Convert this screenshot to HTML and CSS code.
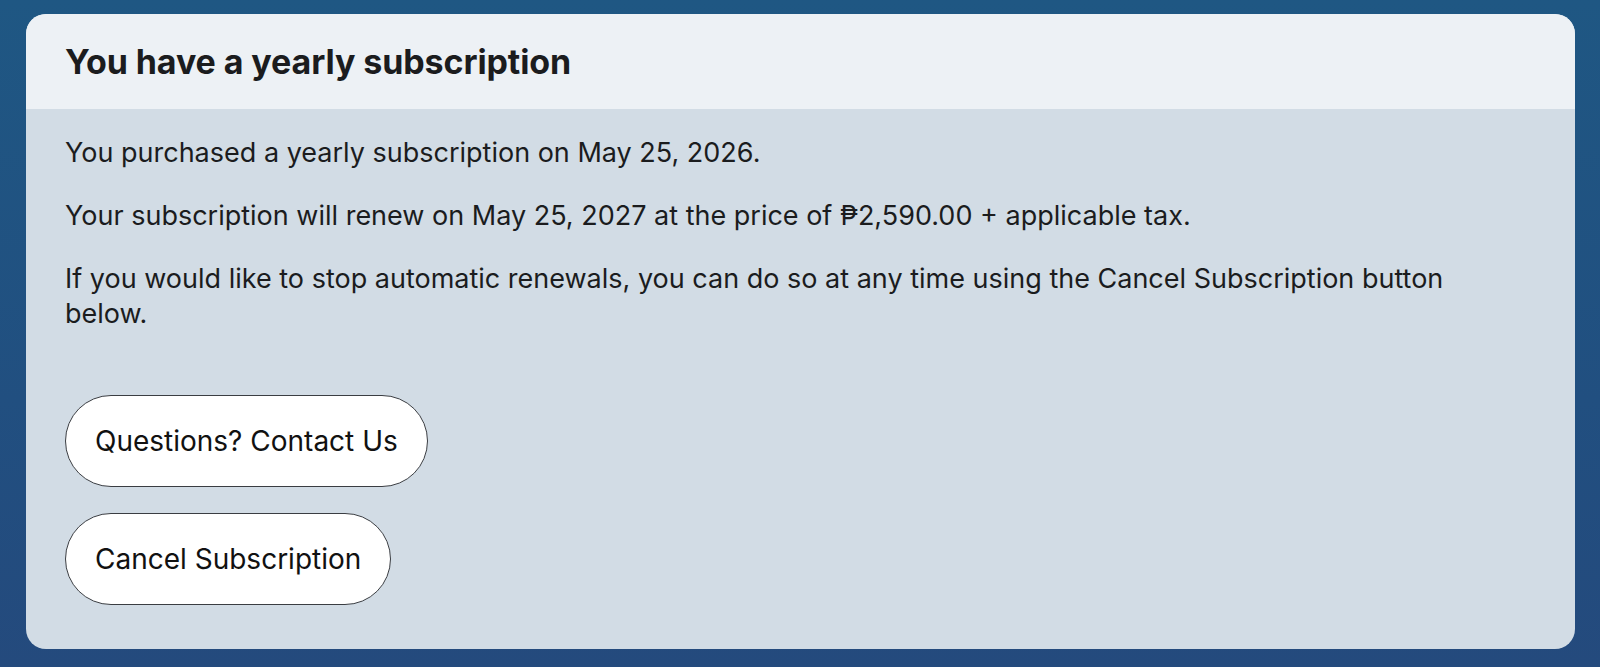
FILE: index.html
```html
<!DOCTYPE html>
<html lang="en">
<head>
    <meta charset="UTF-8">
    <meta name="viewport" content="width=device-width, initial-scale=1.0">
    <title>Subscription</title>
    <link rel="stylesheet" href="styles.css">
</head>
<body>
    <div class="card">
        <div class="card-header">
            <h1>You have a yearly subscription</h1>
        </div>

        <div class="card-body">
            <p>You purchased a yearly subscription on May 25, 2026.</p>
            <p>Your subscription will renew on May 25, 2027 at the price of ₱2,590.00 + applicable tax.</p>
            <p>If you would like to stop automatic renewals, you can do so at any time using the Cancel Subscription button below.</p>

            <!-- actions -->
            <div class="actions">
                <button class="pill-btn">Questions? Contact Us</button>
                <button class="pill-btn">Cancel Subscription</button>
            </div>
        </div>
    </div>
</body>
</html>
```

FILE: styles.css
```css
html, body {
    height: 100%;
}

body {
    margin: 0;
    padding: 14px 25px 16px 26px;
    box-sizing: border-box;
    font-family: Inter, "Noto Sans", sans-serif;
    color: #1b1c1e;
    background: linear-gradient(180deg, #1f5783 0%, #214f80 60%, #244a7d 100%);
}

.card {
    border-radius: 20px;
    overflow: hidden;
    background-color: #d2dce5;
}

.card-header {
    background-color: #edf1f5;
    padding: 0 39px;
    height: 95px;
    display: flex;
    align-items: center;
}

.card-header h1 {
    margin: 0;
    font-size: 34px;
    font-weight: 700;
    letter-spacing: -0.1px;
}

.card-body {
    padding: 26px 39px 44px;
}

.card-body p {
    margin: 0 0 28px;
    font-size: 27px;
    line-height: 35px;
    max-width: 1440px;
}

.actions {
    display: flex;
    flex-direction: column;
    align-items: flex-start;
    gap: 26px;
    margin-top: 64px;
}

.pill-btn {
    font-family: inherit;
    font-size: 28px;
    color: #111;
    background-color: white;
    border: 1px solid #3a3d42;
    border-radius: 48px;
    height: 92px;
    padding: 0 29px;
    cursor: pointer;
}
```
